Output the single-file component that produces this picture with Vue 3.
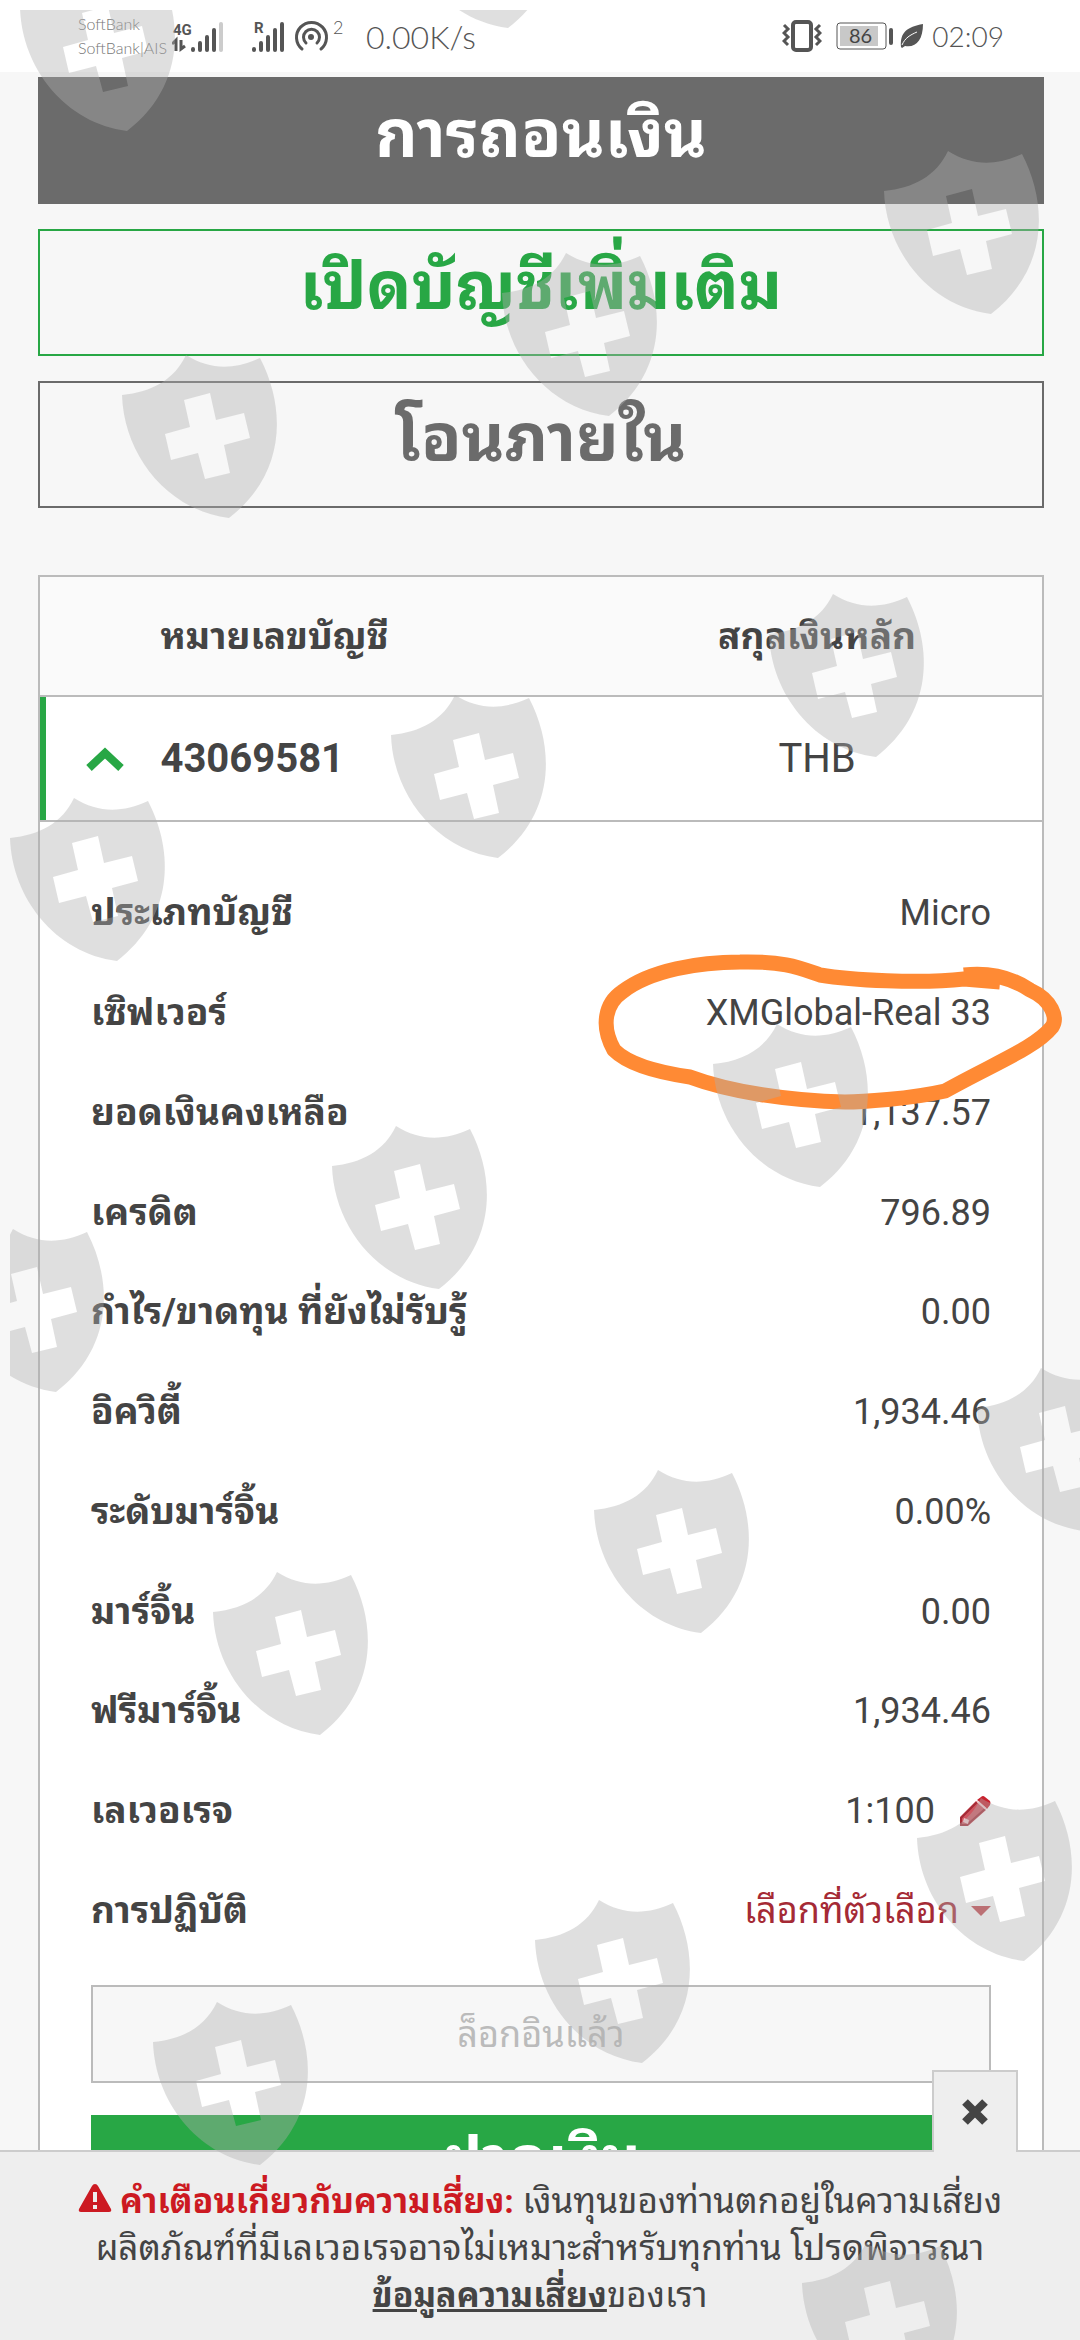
<script setup>
import { ref } from 'vue'

const rows = [
  { label: 'ประเภทบัญชี', value: 'Micro' },
  { label: 'เซิฟเวอร์', value: 'XMGlobal-Real 33' },
  { label: 'ยอดเงินคงเหลือ', value: '1,137.57' },
  { label: 'เครดิต', value: '796.89' },
  { label: 'กำไร/ขาดทุน ที่ยังไม่รับรู้', value: '0.00' },
  { label: 'อิควิตี้', value: '1,934.46' },
  { label: 'ระดับมาร์จิ้น', value: '0.00%' },
  { label: 'มาร์จิ้น', value: '0.00' },
  { label: 'ฟรีมาร์จิ้น', value: '1,934.46' },
  { label: 'เลเวอเรจ', value: '1:100', editable: true },
]

// top-left corner of every shield
const shields = [
  [20, -32], [401, -135], [884, 151], [502, 253], [122, 355], [769, 594],
  [391, 695], [10, 798], [713, 1024], [332, 1126], [-51, 1229], [977, 1368],
  [594, 1470], [213, 1572], [917, 1798], [535, 1900], [153, 2002], [802, 2243],
]

const open = ref(true)
const warning = ref(true)
</script>

<template>
  <div class="screen">
    <header class="status">
      <div class="carriers"><span>SoftBank</span><span>SoftBank|AIS</span></div>
      <svg class="signals" width="180" height="44" viewBox="0 -4 180 44">
        <g fill="none" stroke="#555" stroke-width="4" stroke-linecap="round">
          <path d="M21 32v-1M28 32v-7M35 32v-13M42 32v-20" />
          <path d="M49 32v-26" stroke="#ccc" />
          <path d="M82 32v-1M89 32v-7M96 32v-13M103 32v-20M110 32v-26" />
          <path d="M130 31a15 15 0 1 1 19 0" stroke-width="3" />
          <path d="M134 25a8 8 0 1 1 11 0" stroke-width="3" />
        </g>
        <circle cx="139" cy="19" r="3" fill="#555" />
        <path d="M0 26l4-4v11M9 22v9l4-3" fill="none" stroke="#555" stroke-width="3" />
        <text x="1" y="17" class="tiny">4G</text>
        <text x="82" y="15" class="tiny">R</text>
        <text x="161" y="16" class="sup">2</text>
      </svg>
      <span class="speed">0.00K/s</span>
      <span class="grow"></span>
      <svg width="40" height="34" viewBox="0 0 40 34">
        <rect x="11" y="3" width="18" height="28" rx="3" fill="none" stroke="#555" stroke-width="4" />
        <path d="M2 6l4 4-4 4 4 4-4 4 4 4M38 6l-4 4 4 4-4 4 4 4-4 4" fill="none" stroke="#555" stroke-width="3" />
      </svg>
      <svg class="battery" width="58" height="30" viewBox="0 0 58 30">
        <rect x="1" y="2" width="49" height="26" rx="3" fill="#fff" stroke="#555" stroke-width="1" />
        <rect x="4" y="5" width="38" height="20" fill="#c8c8c8" />
        <path d="M55 9v13" stroke="#555" stroke-width="4" stroke-linecap="round" />
        <text x="13" y="22" class="pct">86</text>
      </svg>
      <svg width="24" height="26" viewBox="0 0 24 26">
        <path d="M1 24C0 9 7 4 23 1c0 16-7 24-18 22l-3 2z" fill="#555" />
        <path d="M2 22C5 15 10 12 17 9" stroke="#fff" stroke-width="1" fill="none" />
      </svg>
      <span class="time">02:09</span>
    </header>

    <main class="content">
      <nav class="actions">
        <button class="action solid">การถอนเงิน</button>
        <button class="action green">เปิดบัญชีเพิ่มเติม</button>
        <button class="action">โอนภายใน</button>
      </nav>

      <table class="accounts">
        <thead>
          <tr>
            <th class="c-toggle"></th>
            <th class="c-number">หมายเลขบัญชี</th>
            <th class="c-currency">สกุลเงินหลัก</th>
          </tr>
        </thead>
        <tbody>
          <tr class="account">
            <td class="c-toggle">
              <button class="toggle" aria-label="43069581" :aria-expanded="open" @click="open = !open">
                <svg width="38" height="26" viewBox="0 0 38 26">
                  <path d="M3 22L19 7l16 15" fill="none" stroke="#28a745" stroke-width="8" />
                </svg>
              </button>
            </td>
            <td class="c-number">43069581</td>
            <td class="c-currency">THB</td>
          </tr>
          <tr v-if="open">
            <td colspan="3" class="details">
              <dl>
                <div v-for="r in rows" :key="r.label" class="row">
                  <dt>{{ r.label }}</dt>
                  <dd>
                    {{ r.value }}
                    <button v-if="r.editable" class="edit" :aria-label="r.label">
                      <svg width="32" height="32" viewBox="0 0 32 32">
                        <path d="M22 2q2-2 4 0l5 4q1 2 0 4l-3 4-10-9z" fill="#c8222e" />
                        <path d="M17 6l10 9L9 31H1v-9z" fill="#cf5560" />
                        <path d="M18 7L2 23v7h6L26 14" fill="none" stroke="#a52a35" stroke-width="2" />
                        <path d="M18 6l9 8" stroke="#f3c9cc" stroke-width="2" />
                        <path d="M5 23l5 2-1 4-5-2z" fill="#f3c9cc" />
                      </svg>
                    </button>
                  </dd>
                </div>
                <div class="row">
                  <dt><label for="operation">การปฏิบัติ</label></dt>
                  <dd class="pick">
                    <select id="operation">
                      <option>เลือกที่ตัวเลือก</option>
                    </select>
                    <svg width="20" height="10" viewBox="0 0 20 10"><path d="M0 0h20L10 10z" fill="#c4464e" /></svg>
                  </dd>
                </div>
              </dl>
              <button class="login" disabled>ล็อกอินแล้ว</button>
              <button class="deposit">ฝากเงิน</button>
            </td>
          </tr>
        </tbody>
      </table>
    </main>

    <footer v-if="warning" class="warning">
      <button class="close" aria-label="ปิด" @click="warning = false">
        <svg width="28" height="28" viewBox="0 0 28 28">
          <path d="M4 4l20 20M24 4L4 24" stroke="#444" stroke-width="8" />
        </svg>
      </button>
      <p>
        <svg class="alert" width="34" height="30" viewBox="0 0 34 30">
          <path d="M17 1q2 0 3 2l13 23q1 3-2 3H3q-3 0-2-3L14 3q1-2 3-2z" fill="#cc1a22" />
          <path d="M17 9v10M17 22v4" stroke="#eee" stroke-width="4" />
        </svg>
        <strong>คำเตือนเกี่ยวกับความเสี่ยง:</strong> เงินทุนของท่านตกอยู่ในความเสี่ยง<br />
        ผลิตภัณฑ์ที่มีเลเวอเรจอาจไม่เหมาะสำหรับทุกท่าน โปรดพิจารณา<br />
        <a href="#">ข้อมูลความเสี่ยง</a>ของเรา
      </p>
    </footer>

    <svg class="scribble" width="480" height="170" viewBox="590 940 480 170">
      <path
        d="M964 975C990 972 1012 978 1030 990C1052 1000 1058 1018 1052 1027C1035 1048 995 1063 945 1091C910 1099 860 1102 845 1102C790 1101 730 1092 690 1077C655 1072 628 1064 614 1050C600 1025 606 1003 622 992C650 970 700 962 740 962C785 961 800 968 820 975C850 980 920 984 964 979L1000 982"
      />
    </svg>

    <svg class="shields" width="100%" height="100%">
      <g v-for="([x, y], i) in shields" :key="i" :transform="`translate(${x - 10} ${y - 10})`">
        <path
          d="M0 40C30 37 52 25 64 0C88 15 112 15 138 3C165 55 163 120 107 163C45 155 2 100 0 40ZM62 45L68 72L43 79L49 105L76 98L83 124L108 118L102 90L128 83L122 58L94 65L88 38Z"
          fill-rule="evenodd"
        />
      </g>
    </svg>
  </div>
</template>

<style>
body { margin: 0; background: #f7f7f7; }
</style>

<style scoped>
.screen {
  position: relative;
  display: flex;
  flex-direction: column;
  height: 100vh;
  overflow: hidden;
  color: #444;
  font-family: Roboto, 'Noto Sans Thai Looped', 'Noto Looped Thai', Loma, Waree, 'Noto Sans Thai', 'Noto Sans', sans-serif;
  font-size: 36px;
}
button, select { font: inherit; color: inherit; cursor: pointer; }

.status {
  display: flex;
  align-items: center;
  flex: none;
  height: 72px;
  padding: 0 76px 0 78px;
  box-sizing: border-box;
  background: #fff;
  color: #555;
  font-family: Lato, sans-serif;
  font-weight: 300;
}
.carriers { display: flex; flex-direction: column; width: 94px; font-size: 16px; line-height: 24px; color: #777; }
.tiny { font: bold 15px Roboto, sans-serif; fill: #555; }
.sup { font: 300 18px Lato, sans-serif; fill: #555; }
.pct { font: 20px Lato, sans-serif; fill: #444; }
.speed { margin-left: 14px; font-size: 32px; }
.grow { flex: 1; }
.battery { margin: 0 6px 0 14px; }
.time { margin-left: 8px; font-size: 28px; }

.content { flex: 1; min-height: 0; overflow: hidden; padding: 5px 36px 0 38px; }
.actions { display: flex; flex-direction: column; gap: 25px; margin-bottom: 67px; }
.action {
  height: 127px;
  padding: 0 0 12px;
  border: 2px solid #6b6b6b;
  background: none;
  color: #6b6b6b;
  font-size: 66px;
  font-weight: bold;
  line-height: 80px;
}
.action.solid { background: #6b6b6b; color: #fff; }
.action.green { border-color: #28a745; color: #28a745; }

.accounts { width: 100%; table-layout: fixed; border-collapse: collapse; border: 2px solid #bbb; background: #fff; }
th { height: 110px; padding: 0 0 8px; background: #fafafa; border-bottom: 2px solid #bbb; font-size: 37px; }
.c-toggle { width: 12%; }
.c-number { width: 43%; text-align: left; }
.c-currency { text-align: center; }
.account td { height: 123px; padding: 0; border-bottom: 2px solid #bbb; font-size: 40px; }
.account .c-number { font-weight: bold; }
.account .c-toggle { box-shadow: inset 6px 0 #28a745; }
.toggle { display: block; margin-left: 46px; padding: 0; border: 0; background: none; }

.details { padding: 41px 51px 0; }
dl { margin: 0; }
.row { display: flex; justify-content: space-between; padding: 25px 0; line-height: 50px; }
.row:nth-child(4n) { padding-bottom: 24px; }
dt { font-size: 37px; font-weight: bold; }
dd { display: flex; align-items: center; margin: 0; }
.edit { display: flex; margin-left: 24px; padding: 0; border: 0; background: none; }
.pick { gap: 12px; color: #a52a35; }
select { appearance: none; padding: 0; border: 0; background: none; line-height: 50px; }

.login, .deposit { display: block; width: 100%; height: 98px; }
.login { margin: 24px 0 32px; padding: 0 0 6px; border: 2px solid #bbb; background: #f7f7f7; color: #bbb; }
.deposit { padding: 0 0 8px; border: 0; background: #28a745; color: #fff; font-size: 60px; font-weight: bold; line-height: 80px; }

.warning {
  position: relative;
  flex: none;
  height: 190px;
  box-sizing: border-box;
  border-top: 2px solid #ccc;
  background: #eee;
  text-align: center;
}
.warning p { margin: 0; padding-top: 26px; font-size: 35px; line-height: 47px; }
.warning strong { color: #cc1a22; font-size: 34px; }
.warning a { color: inherit; font-size: 34px; font-weight: bold; }
.alert { margin-right: 8px; }
.close {
  position: absolute;
  top: -82px;
  right: 62px;
  width: 86px;
  height: 82px;
  padding: 4px 0 0;
  border: 2px solid #ccc;
  border-bottom: 0;
  background: #eee;
}
.scribble, .shields { position: absolute; pointer-events: none; }
.scribble { top: 940px; left: 590px; fill: none; stroke: #ff8a34; stroke-width: 15px; stroke-linejoin: round; }
.shields { top: 10px; left: 10px; fill: rgba(176, 176, 176, 0.4); }
</style>
